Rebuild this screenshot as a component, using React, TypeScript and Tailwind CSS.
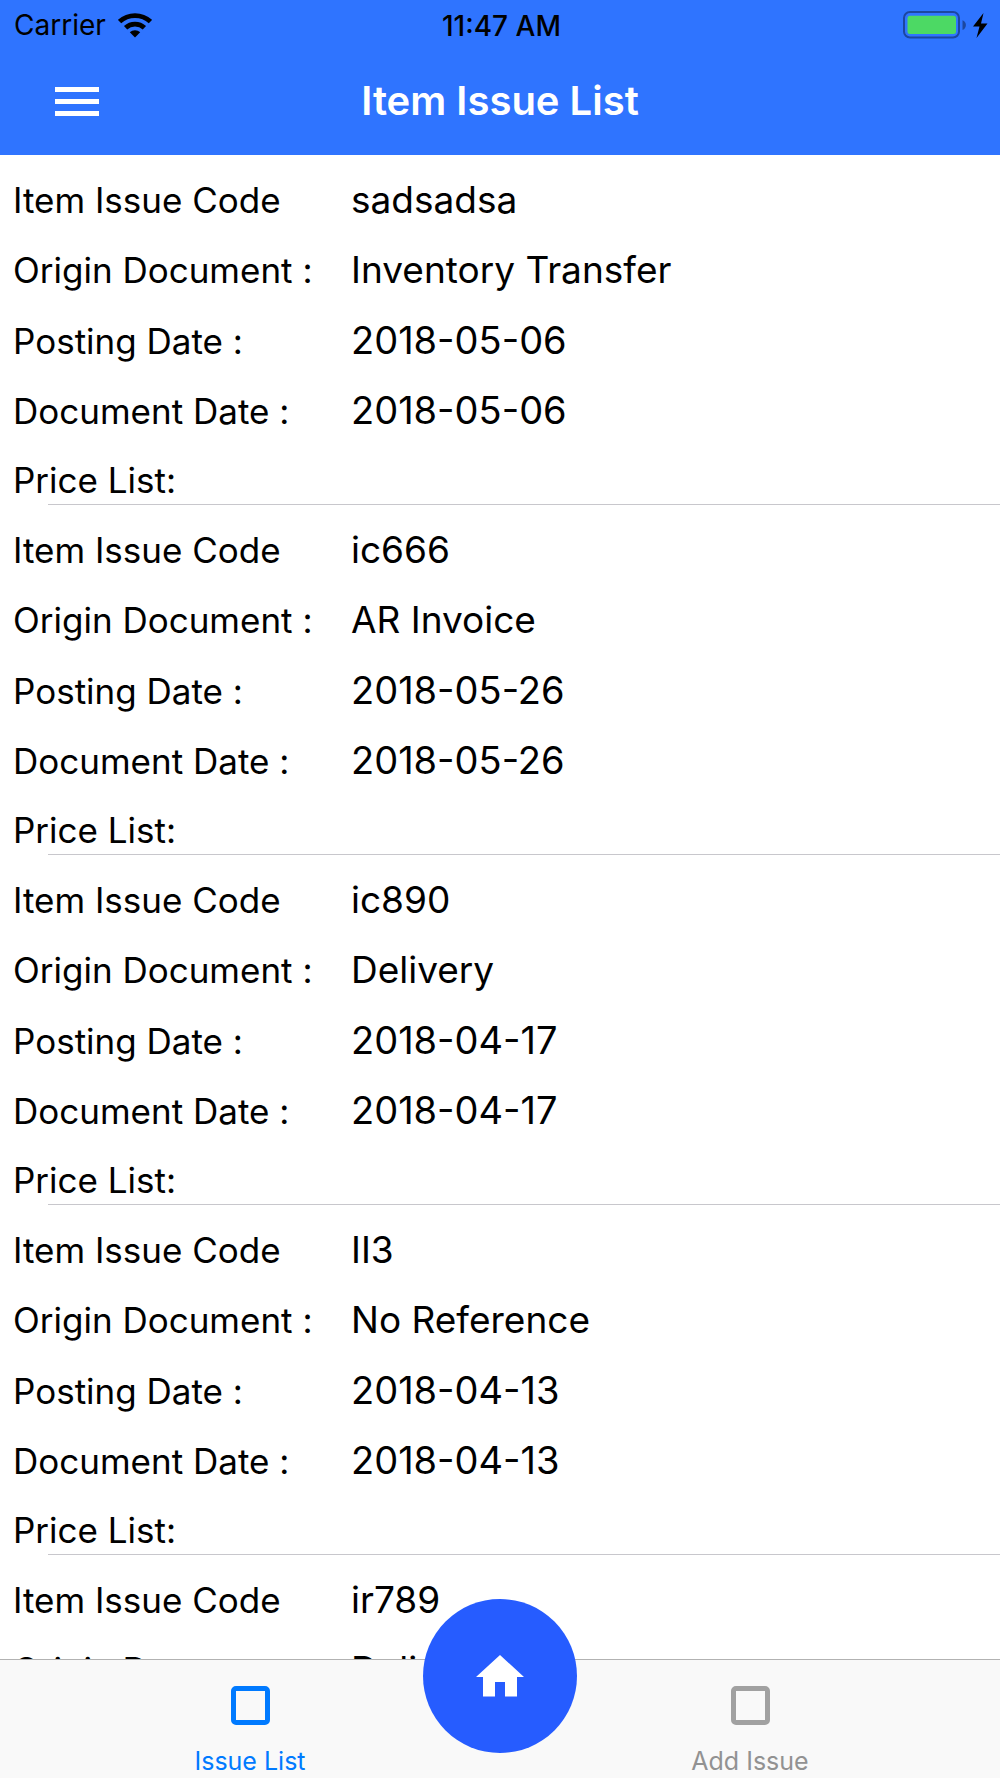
type Issue = {
  code: string;
  origin: string;
  postingDate: string;
  documentDate: string;
  priceList: string;
};

const issues: Issue[] = [
  { code: "sadsadsa", origin: "Inventory Transfer", postingDate: "2018-05-06", documentDate: "2018-05-06", priceList: "" },
  { code: "ic666", origin: "AR Invoice", postingDate: "2018-05-26", documentDate: "2018-05-26", priceList: "" },
  { code: "ic890", origin: "Delivery", postingDate: "2018-04-17", documentDate: "2018-04-17", priceList: "" },
  { code: "II3", origin: "No Reference", postingDate: "2018-04-13", documentDate: "2018-04-13", priceList: "" },
  { code: "ir789", origin: "Delivery", postingDate: "2018-04-13", documentDate: "2018-04-13", priceList: "" },
];

function WifiIcon() {
  return (
    <svg viewBox="0 0 34 25" className="h-[25px] w-[34px]" aria-hidden="true">
      <g fill="none" stroke="#000" strokeWidth="4.8">
        <path d="M1.6 8.6C10.2.5 23.8.5 32.4 8.6" />
        <path d="M7.6 14.7C12.8 9.8 21.2 9.8 26.4 14.7" />
      </g>
      <path d="M17 24.5 11.8 19.2C14.6 16.5 19.4 16.5 22.2 19.2Z" />
    </svg>
  );
}

function BatteryIcon() {
  return (
    <svg viewBox="0 0 86 28" className="h-7 w-[86px]" role="img" aria-label="Battery charging">
      <rect x="1" y="1" width="55" height="25.5" rx="6" fill="none" stroke="#1c479f" strokeWidth="2" />
      <rect x="4.5" y="4.7" width="48.5" height="18.3" rx="2.5" fill="#4cd964" />
      <path d="M59.5 9.2C64 11 64 17 59.5 19Z" fill="#1c479f" />
      <path d="M80.5 2 70 15.500H76.500L73.500 27 84.500 12.500H78Z" />
    </svg>
  );
}

function StatusBar() {
  return (
    <div className="grid h-[50px] grid-cols-3 items-center pr-[11px] pl-[14px] text-[28px] leading-8 text-black">
      <div className="flex items-center gap-3">
        <span>Carrier</span>
        <WifiIcon />
      </div>
      <time className="pt-px text-center font-medium">11:47 AM</time>
      <div className="flex justify-end">
        <BatteryIcon />
      </div>
    </div>
  );
}

function IssueItem({ issue }: { issue: Issue }) {
  const fields = [
    { label: "Item Issue Code", value: issue.code },
    { label: "Origin Document :", value: issue.origin },
    { label: "Posting Date :", value: issue.postingDate, isDate: true },
    { label: "Document Date :", value: issue.documentDate, isDate: true },
    { label: "Price List:", value: issue.priceList },
  ];
  return (
    <li>
      <dl>
        {fields.map(({ label, value, isDate }) => (
          <div key={label} className="flex h-[70px] items-baseline pt-[22px] pl-[13px] last:h-[69px]">
            <dt className="w-[338px] shrink-0 text-[35px] leading-[46px]">{label}</dt>
            <dd className={isDate ? "text-[38px] leading-[46px]" : "text-[37px] leading-[46px]"}>{value}</dd>
          </div>
        ))}
      </dl>
      <div className="ml-12 h-px bg-[#c8c7cc]" />
    </li>
  );
}

function Tab({ label, active }: { label: string; active?: boolean }) {
  return (
    <button
      type="button"
      aria-current={active ? "page" : undefined}
      className={`flex flex-1 flex-col items-center gap-5 pt-[26px] ${active ? "text-[#007aff]" : "text-[#929292]"}`}
    >
      <span className={`size-[39px] rounded-[5px] border-5 ${active ? "border-[#007aff]" : "border-[#a1a1a1]"}`} />
      <span className="text-[25px] leading-8">{label}</span>
    </button>
  );
}

export default function App() {
  return (
    <div className="flex h-screen flex-col overflow-hidden bg-white font-['Inter',sans-serif] text-black">
      <header className="h-[155px] shrink-0 bg-[#2f74ff]">
        <StatusBar />
        <div className="grid h-[105px] grid-cols-[1fr_auto_1fr] items-center pb-[3px] text-white">
          <button type="button" aria-label="Open menu" className="ml-[55px] flex w-11 flex-col gap-[7px]">
            <span className="h-[5px] w-full bg-white" />
            <span className="h-[5px] w-full bg-white" />
            <span className="h-[5px] w-full bg-white" />
          </button>
          <h1 className="text-[40px] leading-[48px] font-semibold">Item Issue List</h1>
        </div>
      </header>

      <main className="min-h-0 flex-1 overflow-y-auto [scrollbar-width:none]">
        <ul>
          {issues.map((issue) => (
            <IssueItem key={issue.code} issue={issue} />
          ))}
        </ul>
      </main>

      <nav className="relative flex h-[119px] shrink-0 border-t border-[#b2b2b2] bg-[#f9f9f9]">
        <Tab label="Issue List" active />
        <Tab label="Add Issue" />
        <button
          type="button"
          aria-label="Home"
          className="absolute -top-[61px] left-1/2 flex size-[154px] -translate-x-1/2 items-center justify-center rounded-full bg-[#265cff]"
        >
          <svg viewBox="0 0 48 42" className="h-[42px] w-12 fill-white" aria-hidden="true">
            <path d="M24 0 48 22H41V41.500H29V27H19V41.500H7V22H0Z" />
          </svg>
        </button>
      </nav>
    </div>
  );
}
